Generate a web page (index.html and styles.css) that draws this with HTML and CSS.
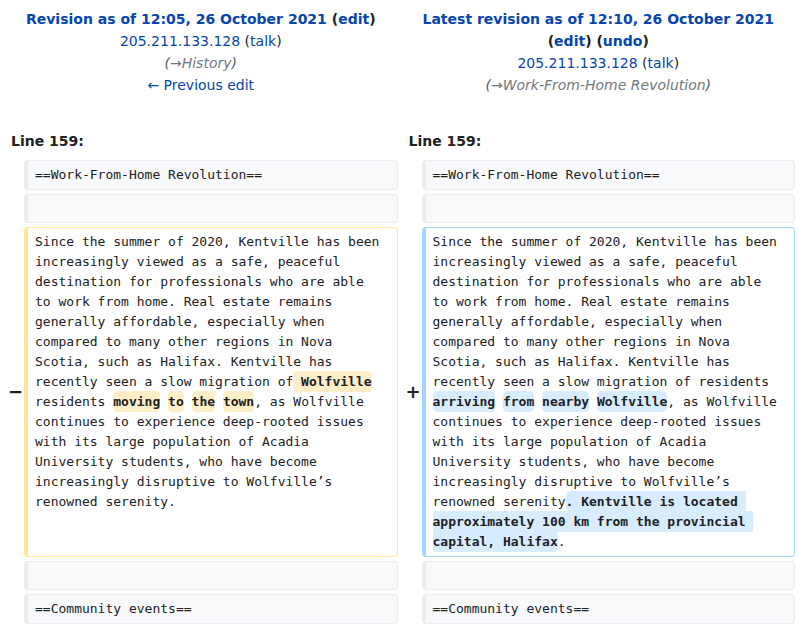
FILE: index.html
```html
<!DOCTYPE html>
<html lang="en">
<head>
<meta charset="utf-8">
<title>Diff</title>
<link rel="stylesheet" href="styles.css">
</head>
<body>
<div class="diff">
  <div class="title">
    <div class="title-main"><a href="#">Revision as of 12:05, 26 October 2021</a> (<a href="#">edit</a>)</div>
    <div><a href="#">205.211.133.128</a> (<a href="#">talk</a>)</div>
    <div class="comment">(<span class="auto"><span class="arrow">→</span>History</span>)</div>
    <div><a href="#">← Previous edit</a></div>
  </div>
  <div class="title">
    <div class="title-main"><a href="#">Latest revision as of 12:10, 26 October 2021</a> (<a href="#">edit</a>) (<a href="#">undo</a>)</div>
    <div><a href="#">205.211.133.128</a> (<a href="#">talk</a>)</div>
    <div class="comment">(<span class="auto"><span class="arrow">→</span>Work-From-Home Revolution</span>)</div>
  </div>

  <div class="lineno">Line 159:</div>
  <div class="lineno">Line 159:</div>

  <div class="marker"></div>
  <div class="line context"><div class="txt">==Work-From-Home Revolution==</div></div>
  <div class="marker"></div>
  <div class="line context"><div class="txt">==Work-From-Home Revolution==</div></div>

  <div class="marker"></div>
  <div class="line context"><div class="txt"> </div></div>
  <div class="marker"></div>
  <div class="line context"><div class="txt"> </div></div>

  <div class="marker"><span>−</span></div>
  <div class="line deleted"><div class="txt">Since the summer of 2020, Kentville has been increasingly viewed as a safe, peaceful destination for professionals who are able to work from home. Real estate remains generally affordable, especially when compared to many other regions in Nova Scotia, such as Halifax. Kentville has recently seen a slow migration of<del> Wolfville</del> residents <del>moving</del> <del>to</del> <del>the</del> <del>town</del>, as Wolfville continues to experience deep-rooted issues with its large population of Acadia University students, who have become increasingly disruptive to Wolfville’s renowned serenity.</div></div>
  <div class="marker"><span>+</span></div>
  <div class="line added"><div class="txt">Since the summer of 2020, Kentville has been increasingly viewed as a safe, peaceful destination for professionals who are able to work from home. Real estate remains generally affordable, especially when compared to many other regions in Nova Scotia, such as Halifax. Kentville has recently seen a slow migration of residents <ins>arriving</ins> <ins>from</ins> <ins>nearby</ins> <ins>Wolfville</ins>, as Wolfville continues to experience deep-rooted issues with its large population of Acadia University students, who have become increasingly disruptive to Wolfville’s renowned serenity<ins>. Kentville is located approximately 100 km from the provincial capital, Halifax</ins>.</div></div>

  <div class="marker"></div>
  <div class="line context"><div class="txt"> </div></div>
  <div class="marker"></div>
  <div class="line context"><div class="txt"> </div></div>

  <div class="marker"></div>
  <div class="line context"><div class="txt">==Community events==</div></div>
  <div class="marker"></div>
  <div class="line context"><div class="txt">==Community events==</div></div>
</div>
</body>
</html>
```
FILE: styles.css
```css
html, body {
  margin: 0;
  padding: 0;
  background: #fff;
}
body {
  font-family: "DejaVu Sans", sans-serif;
  font-size: 14px;
  color: #202122;
}
a {
  color: #0645ad;
  text-decoration: none;
}
.diff {
  display: grid;
  grid-template-columns: 16px 1fr 16px 1fr;
  gap: 4px;
  padding: 4px;
}
.title {
  grid-column: span 2;
  text-align: center;
  line-height: 22px;
  padding-top: 4px;
}
.title-main {
  font-weight: bold;
}
.comment {
  font-style: italic;
  color: #54595d;
}
.auto {
  color: #72777d;
}
.lineno {
  grid-column: span 2;
  font-weight: bold;
  line-height: 22px;
  padding: 30px 7px 4px;
}
.marker {
  display: flex;
  align-items: center;
  justify-content: flex-end;
  font-weight: bold;
  font-size: 18px;
}
.marker span {
  margin-right: -3px;
}
.line {
  font-family: "DejaVu Sans Mono", monospace;
  font-size: 13px;
  line-height: 20px;
  border-style: solid;
  border-width: 1px 1px 1px 4px;
  border-radius: 4px;
  padding: 4px 7px 3.5px;
  min-height: 20px;
}
.txt {
  max-width: 44.9ch;
  white-space: pre-wrap;
  word-wrap: break-word;
  min-height: 20px;
}
.context {
  background: #f8f9fa;
  border-color: #eaecf0;
  color: #202122;
}
.deleted {
  border-color: #ffe49c;
  background: #fff;
}
.added {
  border-color: #a3d3ff;
  background: #fff;
}
del, ins {
  font-weight: bold;
  text-decoration: none;
  border-radius: 0.33em;
  padding: 0.25em 0;
}
del {
  background: #feeec8;
}
ins {
  background: #d8ecff;
}
```
